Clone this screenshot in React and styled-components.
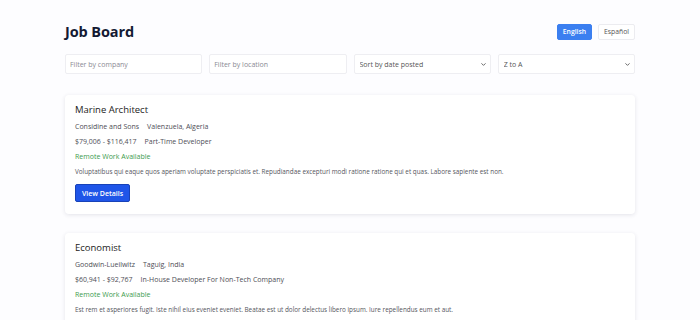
import styled, { createGlobalStyle } from 'styled-components';
import { ChevronDown } from 'lucide-react';

const GlobalStyle = createGlobalStyle`
  body {
    margin: 0;
    background: #fdfdff;
    font-family: "Open Sans", "Noto Sans", sans-serif;
    color: #2d2d33;
  }
`

const jobs = [
  {
    title: 'Marine Architect',
    company: 'Considine and Sons',
    location: 'Valenzuela, Algeria',
    salary: '$79,006 - $116,417',
    role: 'Part-Time Developer',
    description: 'Voluptatibus qui eaque quos aperiam voluptate perspiciatis et. Repudiandae excepturi modi ratione ratione qui et quas. Labore sapiente est non.',
  },
  {
    title: 'Economist',
    company: 'Goodwin-Lueilwitz',
    location: 'Taguig, India',
    salary: '$60,941 - $92,767',
    role: 'In-House Developer For Non-Tech Company',
    description: 'Est rem et asperiores fugit. Iste nihil eius eveniet eveniet. Beatae est ut dolor delectus libero ipsum. Iure repellendus eum et aut.',
  },
];

function App() {
  return (
    <Page>
      <GlobalStyle />
      <Header>
        <Title>Job Board</Title>
        <LangGroup>
          <LangButton active>English</LangButton>
          <LangButton>Español</LangButton>
        </LangGroup>
      </Header>
      <Filters>
        <Input placeholder="Filter by company" />
        <Input placeholder="Filter by location" />
        <SelectWrap>
          <Select defaultValue="date">
            <option value="date">Sort by date posted</option>
          </Select>
          <Chevron size={7} strokeWidth={3} />
        </SelectWrap>
        <SelectWrap>
          <Select defaultValue="za">
            <option value="za">Z to A</option>
          </Select>
          <Chevron size={7} strokeWidth={3} />
        </SelectWrap>
      </Filters>
      <List>
        {jobs.map((job) => (
          <Card key={job.title}>
            <JobTitle>{job.title}</JobTitle>
            <Meta>
              <span>{job.company}</span>
              <span>{job.location}</span>
            </Meta>
            <Meta>
              <span>{job.salary}</span>
              <span>{job.role}</span>
            </Meta>
            <Remote>Remote Work Available</Remote>
            <Description>{job.description}</Description>
            <DetailsButton>View Details</DetailsButton>
          </Card>
        ))}
      </List>
    </Page>
  );
}

const Page = styled.div`
  width: 570px;
  margin: 0 auto;
  padding-top: 22px;
`

const Header = styled.div`
  display: flex;
  justify-content: space-between;
  align-items: center;
`

const Title = styled.h1`
  margin: 0;
  font-size: 14.5px;
  font-weight: 700;
  color: #141a33;
  letter-spacing: -0.1px;
`

const LangGroup = styled.div`
  display: flex;
  gap: 6px;
`

const LangButton = styled.button`
  height: 16px;
  padding: 0 5px;
  font-family: inherit;
  font-size: 6.8px;
  font-weight: ${p => (p.active ? 600 : 400)};
  color: ${p => (p.active ? '#fff' : '#555')};
  background: ${p => (p.active ? '#3b7ff0' : '#fff')};
  border: 1px solid ${p => (p.active ? '#3b7ff0' : '#ececf0')};
  border-radius: 2px;
`

const Filters = styled.div`
  display: grid;
  grid-template-columns: repeat(4, 1fr);
  gap: 7px;
  margin-top: 13px;
`

const Input = styled.input`
  box-sizing: border-box;
  height: 20px;
  padding: 0 4px;
  font-family: inherit;
  font-size: 7px;
  border: 1px solid #eeeef2;
  border-radius: 2px;
  background: #fff;
  &::placeholder {
    color: #8a8a94;
  }
`

const SelectWrap = styled.div`
  position: relative;
  display: flex;
`

const Select = styled.select`
  flex: 1;
  appearance: none;
  box-sizing: border-box;
  height: 20px;
  padding: 0 5px;
  font-family: inherit;
  font-size: 7px;
  color: #555;
  border: 1px solid #eeeef2;
  border-radius: 2px;
  background: #fff;
`

const Chevron = styled(ChevronDown)`
  position: absolute;
  right: 4px;
  top: 7px;
  color: #555;
  pointer-events: none;
`

const List = styled.div`
  display: flex;
  flex-direction: column;
  gap: 19px;
  margin-top: 21px;
`

const Card = styled.div`
  display: flex;
  flex-direction: column;
  align-items: flex-start;
  padding: 8px 10px 12px;
  background: #fff;
  border-radius: 4px;
  box-shadow: 0 1px 4px rgba(40, 40, 70, 0.12);
`

const JobTitle = styled.h2`
  margin: 0 0 3px;
  font-size: 9.5px;
  font-weight: 500;
  color: #1c1c22;
`

const Meta = styled.div`
  display: flex;
  gap: 8px;
  font-size: 7px;
  line-height: 15px;
  color: #4e4e56;
`

const Remote = styled.div`
  font-size: 7px;
  line-height: 15px;
  color: #3d9b4e;
`

const Description = styled.p`
  margin: 0;
  font-size: 6.35px;
  line-height: 15px;
  color: #55555d;
`

const DetailsButton = styled.button`
  margin-top: 5px;
  height: 18px;
  padding: 0 6px;
  font-family: inherit;
  font-size: 7px;
  font-weight: 600;
  color: #fff;
  background: #1f55e8;
  border: 1px solid #1842b8;
  border-radius: 2px;
`

export default App;
